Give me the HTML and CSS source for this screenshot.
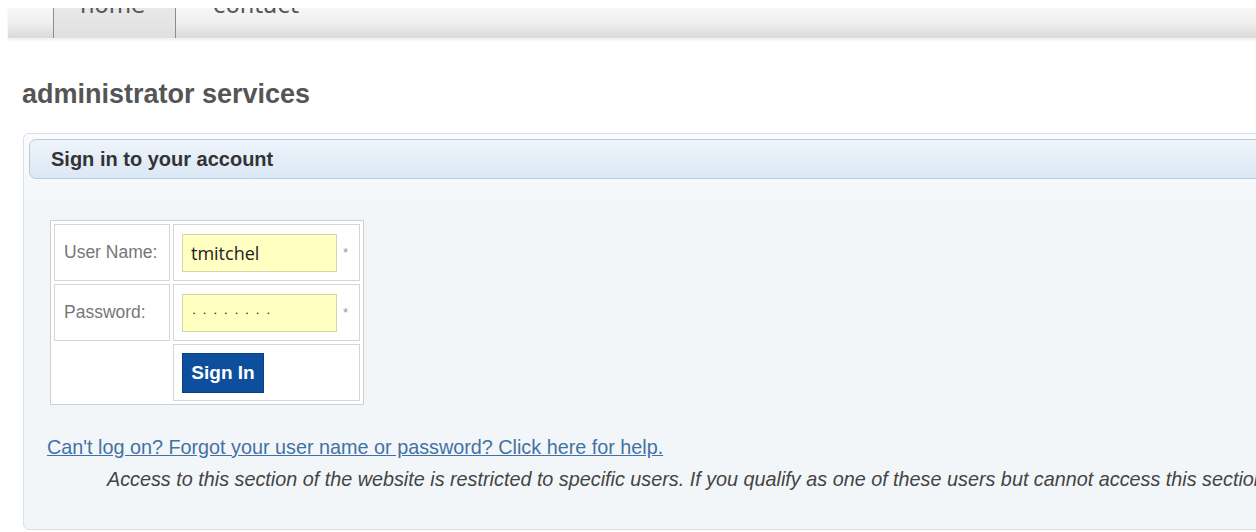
FILE: index.html
```html
<!DOCTYPE html>
<html lang="en">
<head>
<meta charset="utf-8">
<title>administrator services</title>
<link rel="stylesheet" href="styles.css">
</head>
<body>
<div class="page">
  <nav class="topnav">
    <ul class="tabs">
      <li class="tab tab-active"><a href="#">home</a></li>
      <li class="tab"><a href="#">contact</a></li>
    </ul>
  </nav>

  <main class="content">
    <h1 class="title">administrator services</h1>

    <section class="panel">
      <h2 class="panel-head">Sign in to your account</h2>
      <div class="panel-body">
        <form class="login-form" action="#">
          <table class="login">
            <tr>
              <td class="label">User Name:</td>
              <td class="field"><input class="text-input" type="text" value="tmitchel"><span class="req">*</span></td>
            </tr>
            <tr>
              <td class="label">Password:</td>
              <td class="field"><input class="text-input pass-input" type="password" value="password"><span class="req">*</span></td>
            </tr>
            <tr>
              <td class="label empty"></td>
              <td class="field"><button class="btn" type="submit">Sign In</button></td>
            </tr>
          </table>
        </form>
        <p class="help"><a href="#">Can't log on? Forgot your user name or password? Click here for help.</a></p>
        <p class="notice">Access to this section of the website is restricted to specific users. If you qualify as one of these users but cannot access this section, please contact the site administrator.</p>
      </div>
    </section>
  </main>
</div>
</body>
</html>
```

FILE: styles.css
```css
html, body {
  margin: 0;
  padding: 0;
  overflow: hidden;
  background: #fff;
}

.page {
  width: 1500px;
  padding: 8px 0 0 8px;
  font-family: "Liberation Sans", Arial, sans-serif;
}

/* top navigation band */
.topnav {
  height: 30px;
  overflow: hidden;
  background: linear-gradient(#f6f6f6 0, #f1f1f1 45%, #dadada 100%);
  box-shadow: 0 2px 3px rgba(0, 0, 0, 0.07);
}

.tabs {
  display: flex;
  margin: -14px 0 0;
  padding: 0 0 0 45px;
  list-style: none;
  font: 23px/23px "DejaVu Sans", sans-serif;
}

.tab {
  height: 50px;
  padding-left: 37px;
}

.tab a {
  color: #555;
  text-decoration: none;
}

.tab-active {
  width: 95px;
  padding-left: 26px;
  background: linear-gradient(#ececec, #e3e3e3 70%, #dcdcdc);
  border-left: 1px solid #8c8c8c;
  border-right: 1px solid #8c8c8c;
}

/* page content */
.content {
  padding-left: 14px;
}

.title {
  margin: 41px 0 24px;
  font: bold 27px/30px "Liberation Sans", Arial, sans-serif;
  color: #555;
}

.panel {
  margin-left: 1px;
  height: 390px;
  padding: 5px 0 0 5px;
  border: 1px solid #d9e0e8;
  border-radius: 6px;
  background: linear-gradient(#fbfcfd 0, #f3f6f9 70px, #f3f6f9 100%);
}

.panel-head {
  margin: 0;
  height: 38px;
  padding-left: 21px;
  border: 1px solid #b9cde1;
  border-radius: 7px;
  background: linear-gradient(#eef4fa, #dbe8f5);
  font: bold 20px/39px "Liberation Sans", Arial, sans-serif;
  color: #333;
}

.panel-body {
  padding: 41px 0 0 18px;
}

.login-form {
  margin: 0;
}

/* sign-in table */
.login {
  margin-left: 3px;
  border: 1px solid #d0d0d0;
  border-spacing: 3px;
  background: #fff;
}

.login td {
  height: 57px;
  box-sizing: border-box;
  border: 1px solid #d6d6d6;
  padding: 0;
  vertical-align: middle;
}

.login td.empty {
  border-color: transparent;
}

.label {
  width: 116px;
  padding-left: 9px !important;
  font-size: 17.5px;
  color: #777;
}

.field {
  width: 187px;
  padding-left: 8px !important;
}

.text-input {
  box-sizing: border-box;
  width: 155px;
  height: 38px;
  margin: 0;
  padding: 0 0 0 8px;
  border: 1px solid #d5d5a6;
  background: #ffffc2;
  font: 18px "Open Sans", sans-serif;
  color: #222;
  vertical-align: middle;
}

.pass-input {
  padding-left: 10px;
  font: 6px "Liberation Sans", sans-serif;
  letter-spacing: 8.5px;
}

.req {
  margin-left: 6px;
  font-size: 13px;
  color: #999;
  vertical-align: middle;
}

.btn {
  width: 82px;
  height: 40px;
  margin: 0;
  padding: 0;
  border: 1px solid #0a407f;
  background: #0d4f9c;
  font: bold 19px "Liberation Sans", Arial, sans-serif;
  color: #fff;
  vertical-align: middle;
}

.help {
  margin: 31px 0 0;
  font-size: 19.8px;
  line-height: 22px;
}

.help a {
  color: #4272a3;
}

.notice {
  margin: 10px 0 0 60px;
  font-size: 19.8px;
  line-height: 22px;
  font-style: italic;
  color: #444;
  white-space: nowrap;
}
```
